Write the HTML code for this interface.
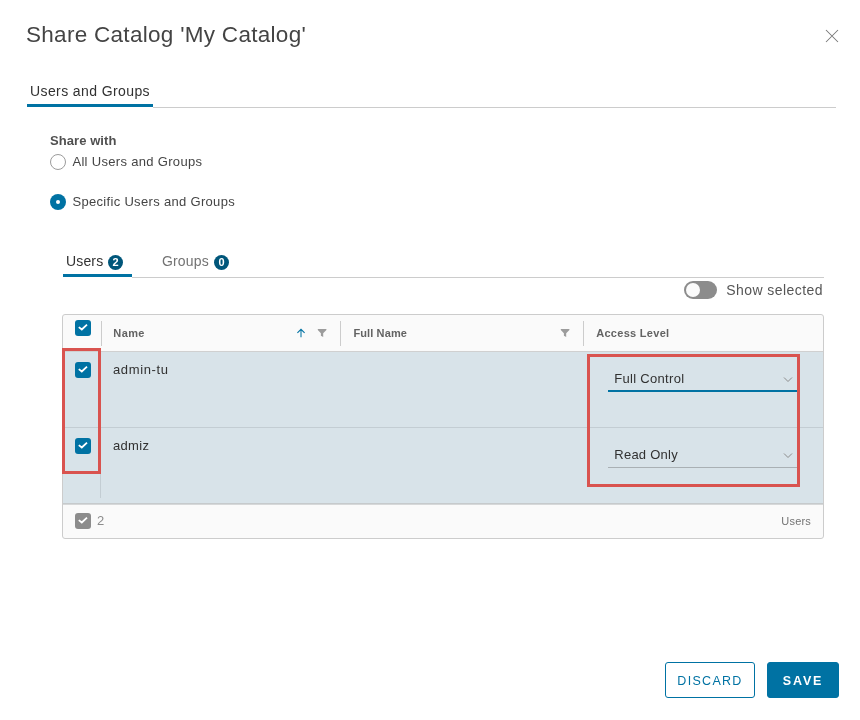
<!DOCTYPE html>
<html lang="en">
<head>
<meta charset="utf-8">
<title>Share Catalog 'My Catalog'</title>
<style>
*{box-sizing:border-box;margin:0;padding:0}
html,body{width:860px;height:720px;background:#fff;overflow:hidden}
body{font-family:"Liberation Sans",sans-serif;color:#565656;position:relative;will-change:transform}
.abs{position:absolute;white-space:nowrap}
#title{left:26px;top:20.6px;font-size:22.5px;line-height:28px;color:#444;letter-spacing:0.29px}
#close{left:824px;top:28px;width:16px;height:16px}
#tab1{left:30px;top:82px;font-size:14px;line-height:18px;color:#313131;letter-spacing:.4px}
#tab1line{left:27px;top:104px;width:126px;height:3px;background:#0072a3}
#tabrule{left:153px;top:107px;width:683px;height:1px;background:#ccc}
#sharewith{left:50px;top:133px;font-size:13px;line-height:16px;font-weight:bold;color:#505050;letter-spacing:.07px}
.radio{width:16px;height:16px;border-radius:50%;border:1px solid #9c9c9c;background:#fff}
.radio.on{border:none;background:#0072a3}
.radio.on::after{content:"";position:absolute;left:5.6px;top:5.6px;width:4.8px;height:4.8px;border-radius:50%;background:#fff}
.rlabel{font-size:13px;line-height:16px;color:#454545;letter-spacing:.32px}
.st{font-size:14px;line-height:18px;letter-spacing:.15px}
.badge{width:15px;height:15px;border-radius:7.5px;background:#00567a;color:#fff;font-size:11px;line-height:15px;text-align:center;font-weight:bold}
#grid{left:62px;top:314px;width:762px;height:225px;border:1px solid #ccc;border-radius:3px;background:#fafafa;overflow:hidden}
#rows{left:0;top:37px;width:760px;height:151px;background:#d8e3e9}
.hsep{width:1px;height:25px;top:6px;background:#ccc}
.hlabel{font-size:11px;line-height:14px;font-weight:bold;color:#636363;top:11px;letter-spacing:.12px}
.cb{width:16px;height:16px;border-radius:3px;background:#0072a3}
.cb svg{display:block}
.cell{font-size:13px;line-height:16px;color:#313131;letter-spacing:.3px}
.redbox{border:3px solid #d9534f}
.btn{top:662px;height:36px;border-radius:3px;font-size:12.5px;line-height:34px;padding-top:1px;text-align:center;letter-spacing:1.3px;border:1px solid #0072a3}
</style>
</head>
<body>
<div id="title" class="abs">Share Catalog 'My Catalog'</div>
<svg id="close" class="abs" viewBox="0 0 16 16"><path d="M2 2 L14 14 M14 2 L2 14" stroke="#787878" stroke-width="1.05" fill="none"/></svg>

<div id="tab1" class="abs">Users and Groups</div>
<div id="tab1line" class="abs"></div>
<div id="tabrule" class="abs"></div>

<div id="sharewith" class="abs">Share with</div>
<div class="abs radio" style="left:50px;top:154px"></div>
<div class="abs rlabel" style="left:72.4px;top:154px">All Users and Groups</div>
<div class="abs radio on" style="left:50px;top:194px"></div>
<div class="abs rlabel" style="left:72.4px;top:194px">Specific Users and Groups</div>

<div class="abs st" style="left:66px;top:252px;color:#313131">Users</div>
<div class="abs badge" style="left:108px;top:255px">2</div>
<div class="abs" style="left:63px;top:274px;width:69px;height:3px;background:#0072a3"></div>
<div class="abs st" style="left:162px;top:252px;color:#737373">Groups</div>
<div class="abs badge" style="left:214px;top:255px">0</div>
<div class="abs" style="left:132px;top:277px;width:692px;height:1px;background:#ccc"></div>

<div class="abs" style="left:684px;top:281px;width:33px;height:18px;border-radius:9px;background:#8c8c8c"></div>
<div class="abs" style="left:685.6px;top:282.8px;width:14.4px;height:14.4px;border-radius:50%;background:#fbfbfb"></div>
<div class="abs st" style="left:726.2px;top:281px;color:#565656;letter-spacing:.44px">Show selected</div>

<div id="grid" class="abs">
  <div class="abs" style="left:0;top:36px;width:760px;height:1px;background:#d0d0d0"></div>
  <div class="abs cb" style="left:12px;top:5px"><svg viewBox="0 0 16 16" width="16" height="16"><path d="M3.8 7.1 L6.8 9.5 L12 4.6" stroke="#fff" stroke-width="1.8" fill="none"/></svg></div>
  <div class="abs hsep" style="left:38px"></div>
  <div class="abs hlabel" style="left:50.3px;letter-spacing:.4px">Name</div>
  <svg class="abs" style="left:232px;top:13px" width="12" height="12" viewBox="0 0 12 12"><path d="M6 9.3 V1.6 M2.4 4.9 L6 1.3 L9.6 4.9" stroke="#0072a3" stroke-width="1.05" fill="none"/></svg>
  <svg class="abs" style="left:254px;top:13px" width="10" height="10" viewBox="0 0 10 10"><path d="M0.8 1 H9.4 V2 L6.2 5.3 V8.9 L3.9 7.7 V5.3 L0.8 2 Z" fill="#9c9c9c"/></svg>
  <div class="abs hsep" style="left:277px"></div>
  <div class="abs hlabel" style="left:290.4px">Full Name</div>
  <svg class="abs" style="left:497px;top:13px" width="10" height="10" viewBox="0 0 10 10"><path d="M0.8 1 H9.4 V2 L6.2 5.3 V8.9 L3.9 7.7 V5.3 L0.8 2 Z" fill="#9c9c9c"/></svg>
  <div class="abs hsep" style="left:520px"></div>
  <div class="abs hlabel" style="left:533.2px;letter-spacing:.29px">Access Level</div>

  <div id="rows" class="abs">
    <div class="abs" style="left:37px;top:0;width:1px;height:146px;background:#c3cdd3"></div>
    <div class="abs" style="left:0;top:75px;width:760px;height:1px;background:#c3cdd3"></div>
    <div class="abs cb" style="left:12px;top:10px"><svg viewBox="0 0 16 16" width="16" height="16"><path d="M3.8 7.1 L6.8 9.5 L12 4.6" stroke="#fff" stroke-width="1.8" fill="none"/></svg></div>
    <div class="abs cb" style="left:12px;top:86px"><svg viewBox="0 0 16 16" width="16" height="16"><path d="M3.8 7.1 L6.8 9.5 L12 4.6" stroke="#fff" stroke-width="1.8" fill="none"/></svg></div>
    <div class="abs cell" style="left:50px;top:10px;letter-spacing:.63px">admin-tu</div>
    <div class="abs cell" style="left:50px;top:86px">admiz</div>

    <div class="abs cell" style="left:551.3px;top:18.5px">Full Control</div>
    <svg class="abs" style="left:720px;top:24px" width="10" height="8" viewBox="0 0 10 8"><path d="M1 1.5 L5 5.5 L9 1.5" stroke="#8c8c8c" stroke-width="1" fill="none"/></svg>
    <div class="abs" style="left:545px;top:38px;width:189px;height:2px;background:#0072a3"></div>
    <div class="abs cell" style="left:551.3px;top:94.5px;letter-spacing:.24px">Read Only</div>
    <svg class="abs" style="left:720px;top:100px" width="10" height="8" viewBox="0 0 10 8"><path d="M1 1.5 L5 5.5 L9 1.5" stroke="#8c8c8c" stroke-width="1" fill="none"/></svg>
    <div class="abs" style="left:545px;top:115px;width:189px;height:1px;background:#a9b0b4"></div>
  </div>
  <div class="abs" style="left:0;top:188px;width:760px;height:1px;background:#c6cacc"></div><div class="abs" style="left:0;top:189px;width:760px;height:1px;background:#d6d8d9"></div>
  <div class="abs cb" style="left:12px;top:198px;background:#8c8c8c"><svg viewBox="0 0 16 16" width="16" height="16"><path d="M3.8 7.1 L6.8 9.5 L12 4.6" stroke="#fff" stroke-width="1.8" fill="none"/></svg></div>
  <div class="abs" style="left:34px;top:198px;font-size:13px;line-height:16px;color:#8c8c8c">2</div>
  <div class="abs" style="left:718.3px;top:199px;font-size:11px;line-height:14px;color:#737373;letter-spacing:.2px">Users</div>
</div>

<div class="abs redbox" style="left:62px;top:348px;width:39px;height:126px"></div>
<div class="abs redbox" style="left:587px;top:354px;width:213px;height:133px"></div>

<div class="abs btn" style="left:665px;width:90px;color:#0072a3;background:#fff">DISCARD</div>
<div class="abs btn" style="left:767px;width:72px;color:#fff;background:#0072a3;font-weight:bold;letter-spacing:1.9px">SAVE</div>
</body>
</html>
